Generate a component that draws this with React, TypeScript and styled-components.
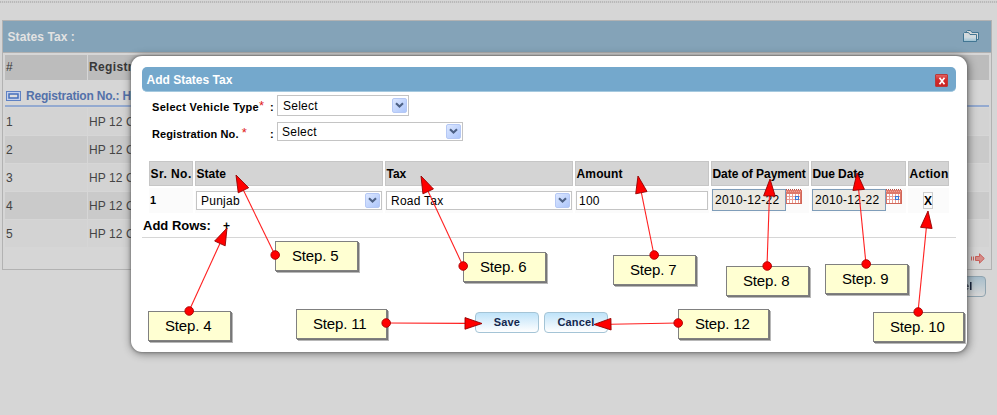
import React from "react";
import styled, { createGlobalStyle } from "styled-components";

const Global = createGlobalStyle`
  * { box-sizing: border-box; }
  body { margin: 0; background: #d6d6d6; overflow: hidden; font-family: "Liberation Sans", Arial, sans-serif; }
`;

const Page = styled.div`
  position: relative;
  width: 997px;
  height: 415px;
  overflow: hidden;
  background: #d6d6d6;
  padding: 1px 5px 0 2px;
`;
const DottedRule = styled.div`
  height: 2px;
  margin: 0 -5px 17px -2px;
  background: repeating-linear-gradient(90deg, #b9b9b9 0 1px, #cfcfcf 1px 2px);
`;
const Panel = styled.section`
  width: 990px;
  height: 250px;
  border: 1px solid #b2b2b2;
  display: flex;
  flex-direction: column;
`;
const PanelHeader = styled.header`
  height: 32px;
  flex: none;
  background: #84a3b8;
  border-bottom: 1px solid #b0b0b0;
  display: flex;
  align-items: center;
  justify-content: space-between;
  padding: 0 11px 0 4.5px;
  color: #e2e2e2;
  font-size: 12px;
  font-weight: bold;
  letter-spacing: 0.08px;
`;
const BackGrid = styled.div`
  margin: 2px 2px 0;
`;
const BackRow = styled.div<{ $bg: string; $h: number; $head?: boolean }>`
  display: grid;
  grid-template-columns: 82px 1fr;
  column-gap: 1px;
  height: ${(p) => p.$h}px;
  font-size: 12px;
  line-height: ${(p) => (p.$head ? p.$h : p.$h + 1)}px;
  color: ${(p) => (p.$head ? "#383838" : "#444")};
  letter-spacing: ${(p) => (p.$head ? 0.35 : 0.1)}px;
  margin-bottom: ${(p) => (p.$head ? 0 : 1)}px;
  span { height: ${(p) => p.$h}px; background: ${(p) => p.$bg}; padding-left: 1px; white-space: nowrap; }
  span:last-child { font-weight: ${(p) => (p.$head ? "bold" : "normal")}; }
`;
const GroupRow = styled.div`
  display: flex;
  align-items: center;
  gap: 5px;
  height: 27px;
  padding: 6px 0 0 1px;
  margin-bottom: 1px;
  border-bottom: 2px solid #94aad0;
  color: #5371aa;
  font-size: 12px;
  font-weight: bold;
  letter-spacing: -0.2px;
`;
const PanelFooter = styled.div`
  display: flex;
  justify-content: flex-end;
  padding: 5px 6px 0 0;
`;
const BackActions = styled.div`
  display: flex;
  justify-content: flex-end;
  padding: 6px 4px 0 0;
  margin-right: 2px;
  filter: brightness(0.84) saturate(0.75);
`;

const Modal = styled.section`
  position: absolute;
  left: 131px;
  top: 56px;
  width: 836px;
  height: 296px;
  background: #fff;
  border-radius: 11px;
  padding: 11px;
  box-shadow: 0 0 2px 1px rgba(100, 100, 100, 0.5), 1px 1px 8px 1px rgba(0, 0, 0, 0.42);
  color: #000;
`;
const ModalTitle = styled.header`
  height: 25px;
  border-radius: 5px;
  background: #74a8cc;
  border-bottom: 1px solid #a5c9df;
  color: #fff;
  font-size: 12px;
  font-weight: bold;
  display: flex;
  align-items: center;
  justify-content: space-between;
  padding: 1px 8px 0 4.5px;
`;
const Close = styled.button`
  width: 13px;
  height: 13px;
  padding: 0;
  margin-top: 2px;
  border: 1px solid #b83a3a;
  border-radius: 1px;
  background: linear-gradient(#e26060, #d32a2a 45%, #c92323);
  display: grid;
  place-items: center;
`;
const Form = styled.div`
  display: grid;
  grid-template-columns: 118px 7px 1fr;
  grid-template-rows: 20px 19px;
  row-gap: 7px;
  margin: 3px 0 20px 10px;
`;
const Label = styled.label<{ $space?: number }>`
  font-size: 11px;
  font-weight: bold;
  line-height: 24px;
  letter-spacing: ${(p) => p.$space ?? 0}px;
  white-space: nowrap;
  i { color: #e02020; font: 13px/10px "Liberation Sans", Arial, sans-serif; vertical-align: 1px; letter-spacing: 0; }
`;
const SelectBox = styled.div<{ $w: number; $h?: number; $pad?: number }>`
  width: ${(p) => p.$w}px;
  height: ${(p) => p.$h ?? 19}px;
  border: 1px solid #c4c4c4;
  background: #fff;
  display: flex;
  align-items: center;
  justify-content: space-between;
  padding: 0 1px 0 ${(p) => p.$pad ?? 4}px;
  font-size: 12px;
  letter-spacing: 0.25px;
`;
const Drop = styled.span`
  width: 15px;
  height: 15px;
  border: 1px solid #b5c8f5;
  border-radius: 2px;
  background: linear-gradient(135deg, #dce7ff, #adc6fb);
  display: grid;
  place-items: center;
`;
const TaxGrid = styled.div`
  display: grid;
  grid-template-columns: 44px 188px 188px 134px 98px 95px 41px;
  grid-template-rows: 25px 25px;
  column-gap: 2px;
  row-gap: 2px;
  margin-left: 7px;
`;
const Th = styled.div<{ $space?: number }>`
  background: #d4d4d4;
  border: 1px solid #c6c6c6;
  font-size: 12px;
  font-weight: bold;
  line-height: 24px;
  padding-left: 0.5px;
  white-space: nowrap;
  letter-spacing: ${(p) => p.$space ?? 0}px;
`;
const Td = styled.div`
  background: #fbfbfb;
  display: flex;
  align-items: flex-start;
  padding: 3px 0 0 1px;
`;
const Index = styled.b`
  font-size: 11px;
  line-height: 19px;
`;
const AmountInput = styled.div`
  width: 132px;
  height: 19px;
  border: 1px solid #c4c4c4;
  background: #fff;
  font-size: 12px;
  line-height: 18px;
  padding-left: 2px;
  letter-spacing: 0.25px;
`;
const DateInput = styled.div`
  width: 74px;
  height: 22px;
  margin-top: -2px;
  border: 1px solid #7f9db9;
  background: #ebe9e2;
  font-size: 12px;
  line-height: 21px;
  padding-left: 2px;
  letter-spacing: 0.3px;
`;
const Remove = styled.b`
  width: 10px;
  height: 17px;
  margin: 1px 0 0 14px;
  border: 1px solid #cfcfcf;
  font-size: 12px;
  line-height: 16px;
  display: flex;
  justify-content: center;
`;
const AddRows = styled.div`
  height: 25px;
  display: flex;
  gap: 12px;
  align-items: center;
  padding: 1px 0 0 1px;
  border-bottom: 1px solid #d6d6d6;
  font-size: 13px;
  font-weight: bold;
  letter-spacing: 0;
`;
const Plus = styled.span`
  font-size: 12px;
  width: 8px;
`;
const Buttons = styled.div`
  display: flex;
  gap: 5px;
  margin: 74px 0 0 333px;
`;
const Button = styled.button`
  width: 64px;
  height: 21px;
  border: 1px solid #a4c4d6;
  border-radius: 4px;
  background: linear-gradient(#bfe3f9, #e2f2fc 55%, #fff);
  color: #14284e;
  font: bold 11px/18px "Liberation Sans", Arial, sans-serif;
  padding: 0 0 1px;
  letter-spacing: 0.15px;
`;
const Note = styled.div<{ $x: number; $y: number; $w?: number }>`
  position: absolute;
  left: ${(p) => p.$x}px;
  top: ${(p) => p.$y}px;
  width: ${(p) => p.$w ?? 83}px;
  height: 30px;
  border: 1px solid #808080;
  background: #ffffd2;
  box-shadow: 1px 1px 0 #777, 2px 2px 0 #b8b8b8;
  font-size: 15px;
  line-height: 28px;
  padding-left: 16px;
  letter-spacing: -0.15px;
  white-space: nowrap;
`;
const Arrows = styled.svg`
  position: absolute;
  left: 0;
  top: 0;
`;

const Chevron = () => (
  <Drop>
    <svg width="9" height="7" viewBox="0 0 9 7"><path d="M1 1.3 4.5 4.6 8 1.3" fill="none" stroke="#4d6185" strokeWidth="2.1" /></svg>
  </Drop>
);

const Select = ({ text, w, h, pad }: { text: string; w: number; h?: number; pad?: number }) => (
  <SelectBox $w={w} $h={h} $pad={pad}>{text}<Chevron /></SelectBox>
);

const CalendarShape = styled.svg`
  margin-top: -2px;
`;
const Calendar = () => (
  <CalendarShape width="16" height="16" shapeRendering="crispEdges">
    <rect y="1" width="16" height="14" fill="#e0796a" />
    <path d="M0 .5H16" stroke="#b94a40" strokeDasharray="1 1" />
    <path d="M0 2.5H16" stroke="#f0a092" strokeDasharray="1 1" />
    <rect x="1" y="5" width="13" height="9" fill="#fff" />
    <path d="M1 7.5H14M1 10.5H14M3.5 5V14M6.5 5V14M9.5 5V14M12.5 5V14" stroke="#eba096" />
    <rect x="9.5" y="7.5" width="3" height="3" fill="#d9eaff" stroke="#3978d6" />
    <path d="M15.5 2V15M0 14.5H16" stroke="#d0675a" />
  </CalendarShape>
);

const Folder = () => (
  <svg width="17" height="13" viewBox="0 0 17 13">
    <defs><linearGradient id="folderFill" x2="0" y2="1"><stop stopColor="#d8d8d8" /><stop offset=".5" stopColor="#cfdbe0" /><stop offset="1" stopColor="#8fbace" /></linearGradient></defs>
    <path d="M3.5 4V1.5L4.5.5H7.5L9 2.5H15.5V9.5H14" fill="#d5d9da" stroke="#427693" />
    <path d="M.5 12V3.5L1.5 2.5H5.5L7 4.5H13.5V11.5H.5" fill="url(#folderFill)" stroke="#427693" />
  </svg>
);

const arrows = [
  [189, 311, 227, 228], [275, 255, 236, 175], [463, 266, 421, 176],
  [654, 255, 638, 176], [767, 266, 770, 179], [866, 264, 857, 173],
  [918, 312, 928, 211], [386, 323, 482, 323.5], [678, 323, 594, 324.5],
];
const Pointer = ({ p }: { p: number[] }) => {
  const [x, y, tx, ty] = p;
  const len = Math.hypot(tx - x, ty - y);
  const dx = (tx - x) / len;
  const dy = (ty - y) / len;
  const bx = tx - dx * 17;
  const by = ty - dy * 17;
  return (
    <g>
      <path d={`M${x} ${y}L${bx} ${by}`} stroke="#ff2020" strokeWidth="1.1" />
      <path d={`M${tx} ${ty}L${bx - dy * 5.8} ${by + dx * 5.8}L${bx + dy * 5.8} ${by - dx * 5.8}Z`} fill="#f00" stroke="#930000" strokeWidth=".9" />
      <circle cx={x + 0.2} cy={y} r="4.3" fill="#f00" stroke="#a80000" strokeWidth=".9" />
    </g>
  );
};

const notes: [string, number, number, number?][] = [
  ["Step. 4", 148, 311], ["Step. 5", 275, 241], ["Step. 6", 463, 252],
  ["Step. 7", 613, 255], ["Step. 8", 726, 266], ["Step. 9", 825, 264],
  ["Step. 10", 873, 312, 91], ["Step. 11", 296, 309, 91], ["Step. 12", 678, 309, 91],
];

export default function App() {
  return (
    <>
      <Global />
      <Page>
        <DottedRule />
        <Panel>
          <PanelHeader>States Tax :<Folder /></PanelHeader>
          <BackGrid>
            <BackRow $bg="#bcbcbc" $h={25} $head><span>#</span><span>Registration No.</span></BackRow>
            <GroupRow>
              <svg width="15" height="10"><rect x=".5" y=".5" width="14" height="9" fill="#c4d1ec" stroke="#5f82c4" /><rect x="3" y="3" width="9" height="4" fill="#dedede" stroke="#456fba" strokeWidth="1.5" /></svg>
              Registration No.: HP 12 C
            </GroupRow>
            {[1, 2, 3, 4, 5].map((n) => (
              <BackRow key={n} $h={27} $bg={n % 2 ? "#d3d3d3" : "#cacaca"}><span>{n}</span><span>HP 12 C</span></BackRow>
            ))}
          </BackGrid>
          <PanelFooter>
            <svg width="14" height="11" viewBox="0 0 14 11"><path d="M.5 3.5V7.5M2.5 3.5V7.5M4.5 3.5H8.5V.8L13.3 5.5 8.5 10.2V7.5H4.5Z" fill="#d58b86" stroke="#c85f5a" /></svg>
          </PanelFooter>
        </Panel>
        <BackActions><Button>Cancel</Button></BackActions>

        <Modal>
          <ModalTitle>
            Add States Tax
            <Close aria-label="Close"><svg width="8" height="8" viewBox="0 0 8 8"><path d="M1.5.8 6.5 7.2M6.5.8 1.5 7.2" stroke="#fff" strokeWidth="1.7" /></svg></Close>
          </ModalTitle>
          <Form>
            <Label $space={0.3}>Select Vehicle Type<i>*</i></Label><Label>:</Label><Select text="Select" w={132} h={21} pad={5} />
            <Label $space={0.1}>Registration No. <i>*</i></Label><Label>:</Label><Select text="Select" w={186} />
          </Form>
          <TaxGrid>
            <Th $space={0.45}>Sr. No.</Th><Th>State</Th><Th>Tax</Th><Th $space={0.15}>Amount</Th><Th $space={-0.05}>Date of Payment</Th><Th $space={-0.1}>Due Date</Th><Th $space={0.3}>Action</Th>
            <Td><Index>1</Index></Td>
            <Td><Select text="Punjab" w={186} /></Td>
            <Td><Select text="Road Tax" w={186} /></Td>
            <Td><AmountInput>100</AmountInput></Td>
            <Td><DateInput>2010-12-22</DateInput><Calendar /></Td>
            <Td><DateInput>2010-12-22</DateInput><Calendar /></Td>
            <Td><Remove>X</Remove></Td>
          </TaxGrid>
          <AddRows>Add Rows:<Plus>+</Plus></AddRows>
          <Buttons><Button>Save</Button><Button>Cancel</Button></Buttons>
        </Modal>

        {notes.map(([text, x, y, w]) => <Note key={text} $x={x} $y={y} $w={w}>{text}</Note>)}
        <Arrows width="997" height="415">{arrows.map((p, i) => <Pointer key={i} p={p} />)}</Arrows>
      </Page>
    </>
  );
}
